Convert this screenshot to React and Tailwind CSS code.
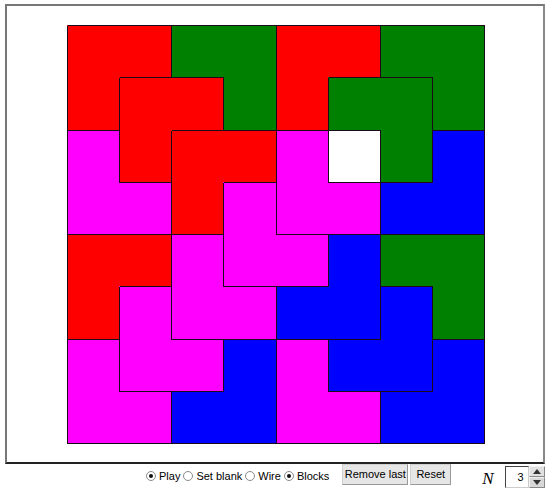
import React from "react";

const TROMINOES = [
  ["#ff0000", [[0,0],[0,1],[1,0]]],
  ["#ff0000", [[1,1],[1,2],[2,1]]],
  ["#ff0000", [[2,2],[2,3],[3,2]]],
  ["#008000", [[0,2],[0,3],[1,3]]],
  ["#ff0000", [[0,4],[0,5],[1,4]]],
  ["#008000", [[0,6],[0,7],[1,7]]],
  ["#008000", [[1,5],[1,6],[2,6]]],
  ["#ff00ff", [[2,0],[3,0],[3,1]]],
  ["#ff00ff", [[2,4],[3,4],[3,5]]],
  ["#0000ff", [[2,7],[3,6],[3,7]]],
  ["#ff00ff", [[3,3],[4,3],[4,4]]],
  ["#ff0000", [[4,0],[4,1],[5,0]]],
  ["#ff00ff", [[4,2],[5,2],[5,3]]],
  ["#0000ff", [[4,5],[5,4],[5,5]]],
  ["#008000", [[4,6],[4,7],[5,7]]],
  ["#ff00ff", [[5,1],[6,1],[6,2]]],
  ["#0000ff", [[5,6],[6,5],[6,6]]],
  ["#ff00ff", [[6,0],[7,0],[7,1]]],
  ["#0000ff", [[6,3],[7,2],[7,3]]],
  ["#ff00ff", [[6,4],[7,4],[7,5]]],
  ["#0000ff", [[6,7],[7,6],[7,7]]],
  ["#ffffff", [[2,5]]],
];

const X = Array.from({ length: 9 }, (_, i) => 1 + Math.round(i * 52.125));
const Y = Array.from({ length: 9 }, (_, j) => 1 + Math.round(j * 52.25));

function Board() {
  const id = Array.from({ length: 8 }, () => Array(8).fill(-1));
  const color = Array.from({ length: 8 }, () => Array(8).fill("#fff"));
  TROMINOES.forEach(([c, cells], k) => {
    cells.forEach(([r, q]) => {
      id[r][q] = k;
      color[r][q] = c;
    });
  });
  const rects = [];
  let d = "";
  for (let r = 0; r < 8; r++) {
    for (let c = 0; c < 8; c++) {
      rects.push(
        <rect
          key={`${r}-${c}`}
          x={X[c]}
          y={Y[r]}
          width={X[c + 1] - X[c] + 1}
          height={Y[r + 1] - Y[r] + 1}
          fill={color[r][c]}
        />
      );
      const k = id[r][c];
      const x0 = X[c] + 0.5, x1 = X[c + 1] + 0.5, y0 = Y[r] + 0.5, y1 = Y[r + 1] + 0.5;
      if (r === 0 || id[r - 1][c] !== k) d += `M${x0} ${y0}H${x1}`;
      if (r === 7 || id[r + 1][c] !== k) d += `M${x0} ${y1}H${x1}`;
      if (c === 0 || id[r][c - 1] !== k) d += `M${x0} ${y0}V${y1}`;
      if (c === 7 || id[r][c + 1] !== k) d += `M${x1} ${y0}V${y1}`;
    }
  }
  return (
    <svg width="420" height="421" className="block ml-[59px] mt-[18px]" shapeRendering="crispEdges">
      {rects}
      <path d={d} stroke="#1a0a1a" strokeWidth="1" fill="none" />
    </svg>
  );
}

function Radio({ checked, label }) {
  return (
    <div className="flex items-center">
      <span className="w-[10px] h-[10px] rounded-full border border-[#8a8a8a] bg-white flex items-center justify-center">
        {checked && <span className="w-[4px] h-[4px] rounded-full bg-[#111]" />}
      </span>
      <span className="ml-[3px] mr-[2px]">{label}</span>
    </div>
  );
}

export default function App() {
  return (
    <div
      className="w-[549px] h-[493px] bg-white text-black overflow-hidden"
      style={{ fontFamily: '"Liberation Sans", Arial, sans-serif' }}
    >
      <div className="ml-[5px] mt-[4px] w-[540px] h-[460px] border-2 border-t-[#777] border-l-[#777] border-r-[#888] border-b-[#222] bg-white">
        <Board />
      </div>
      <div className="flex items-start pl-[146px] text-[11px] leading-none whitespace-nowrap">
        <div className="flex items-center h-[22px] mt-[1px] gap-[1px]">
          <Radio checked label="Play" />
          <Radio label="Set blank" />
          <Radio label="Wire" />
          <Radio checked label="Blocks" />
        </div>
        <div className="flex ml-[11px] gap-[2px]">
          <button className="h-[21px] w-[66px] shrink-0 bg-[#e6e6e6] border border-t-[#d0d0d0] border-l-[#d0d0d0] border-r-[#999] border-b-[#999] text-[11px] leading-none whitespace-nowrap flex items-center justify-center">
            Remove last
          </button>
          <button className="h-[21px] w-[41px] shrink-0 bg-[#e6e6e6] border border-t-[#d0d0d0] border-l-[#d0d0d0] border-r-[#999] border-b-[#999] text-[11px] leading-none whitespace-nowrap flex items-center justify-center">
            Reset
          </button>
        </div>
        <span
          className="ml-[31px] mt-[6px] text-[17px] italic leading-none"
          style={{ fontFamily: '"Liberation Serif", "Times New Roman", serif' }}
        >
          N
        </span>
        <div className="flex ml-[11px] mt-[2px]">
          <div className="w-[24px] h-[22px] border border-t-[#444] border-l-[#444] border-r-[#ccc] border-b-[#ccc] bg-white flex items-center justify-end pr-[4px] text-[11px]">
            3
          </div>
          <div className="flex flex-col w-[16px] h-[22px]">
            <div className="h-[11px] bg-[#e0e0e0] border border-t-[#f0f0f0] border-l-[#f0f0f0] border-r-[#888] border-b-[#888] flex items-center justify-center">
              <svg width="8" height="5"><polygon points="0,5 8,5 4,0" fill="#333" /></svg>
            </div>
            <div className="h-[11px] bg-[#d8d8d8] border border-t-[#f0f0f0] border-l-[#f0f0f0] border-r-[#888] border-b-[#888] flex items-center justify-center">
              <svg width="8" height="5"><polygon points="0,0 8,0 4,5" fill="#333" /></svg>
            </div>
          </div>
        </div>
      </div>
    </div>
  );
}
